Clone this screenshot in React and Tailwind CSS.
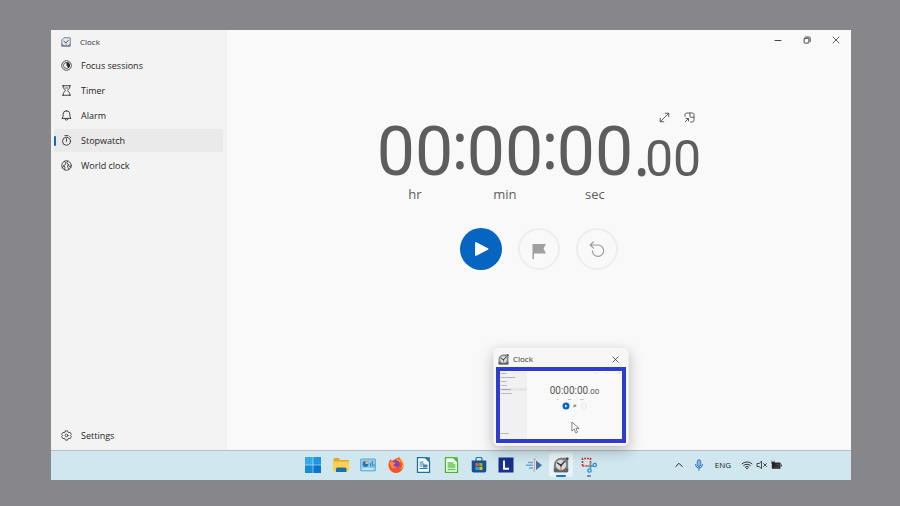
import React from "react";

const line = { fill: "none", stroke: "currentColor", strokeLinecap: "round", strokeLinejoin: "round" };

function ClockLogo({ className }) {
  return (
    <svg viewBox="0 0 20 20" className={className} aria-hidden="true">
      <path d="M10 1h7.500A1.500 1.500 0 0 1 19 2.500V17.500A1.500 1.500 0 0 1 17.500 19h-15A1.500 1.500 0 0 1 1 17.500V10a9 9 0 0 1 9-9z" fill="#7f8387" />
      <path d="M1 14.500h18v3a1.500 1.500 0 0 1-1.500 1.500h-15A1.500 1.500 0 0 1 1 17.500z" fill="#5d6165" />
      <circle cx="10" cy="9.800" r="7" fill="#d9dadb" stroke="#5f6468" strokeWidth=".8" />
      <path d="M5.500 7.500 10 10.500l4-4.500" fill="none" stroke="#2e2e2e" strokeWidth="1.600" strokeLinecap="round" />
      <path d="M10 10.500v5" stroke="#d9482f" strokeWidth="1" strokeLinecap="round" />
      <circle cx="10" cy="10.500" r="1.400" fill="#333" />
      <circle cx="18" cy="2" r="1.500" fill="#37393b" />
    </svg>
  );
}

function TitleLogo() {
  return (
    <svg viewBox="0 0 20 20" className="size-[10px]" aria-hidden="true">
      <path d="M6 1.500h12.500v17h-17V6z" fill="#e2e8ee" stroke="#6c7a88" strokeWidth="1.800" />
      <path d="M1.500 13v5.500h17V13l-4.500 3.500H6z" fill="#70808f" />
      <path d="m5 8 5 4 5-6" fill="none" stroke="#454f59" strokeWidth="1.800" />
      <path d="M10 12v4" stroke="#d98a70" strokeWidth="1.800" />
    </svg>
  );
}

function FocusIcon() {
  return (
    <svg viewBox="0 0 22 22" className="size-[11px]" aria-hidden="true">
      <circle cx="11" cy="11" r="9.600" {...line} strokeWidth="1.500" strokeDasharray="3.500 1.200" />
      <circle cx="11" cy="11" r="6" {...line} strokeWidth="1.500" />
      <path d="M11 4a7 7 0 0 1 4.500 12.400L11 11z" fill="currentColor" />
    </svg>
  );
}

function TimerIcon() {
  return (
    <svg viewBox="0 0 22 22" className="size-[11px]" aria-hidden="true">
      <path d="M3 1.500h16M3 20.500h16M4.500 1.500v3c0 3 4 4 4 6.500s-4 3.500-4 6.500v3M17.500 1.500v3c0 3-4 4-4 6.500s4 3.500 4 6.500v3" {...line} strokeWidth="1.700" />
      <path d="M8 6h6" {...line} strokeWidth="1.300" />
    </svg>
  );
}

function AlarmIcon() {
  return (
    <svg viewBox="0 0 22 22" className="size-[11px]" aria-hidden="true">
      <path d="M11 1.500a6.800 6.800 0 0 0-6.800 6.800V13L2 16.800h18L17.800 13V8.300A6.800 6.800 0 0 0 11 1.500zM8.200 17.500a2.800 2.800 0 0 0 5.600 0" {...line} strokeWidth="1.700" />
    </svg>
  );
}

function StopwatchIcon() {
  return (
    <svg viewBox="0 0 22 22" className="size-[11px]" aria-hidden="true">
      <circle cx="11" cy="12.500" r="8" {...line} strokeWidth="1.700" />
      <path d="M11 7.500v5M8 1.200h6M17.500 3.500l2 2" {...line} strokeWidth="1.700" />
    </svg>
  );
}

function WorldIcon() {
  return (
    <svg viewBox="0 0 22 22" className="size-[11px]" aria-hidden="true">
      <circle cx="11" cy="11" r="9.500" {...line} strokeWidth="1.600" />
      <path d="M3 16l2.500-5L9 9l.5-3L7 3M5.500 11 8 14l-1 5.500M13 2.500 11.500 6l3 2.500 1.500 4 4 2M14.500 8.500 13 13l2.500 5.500" {...line} strokeWidth="1.500" />
    </svg>
  );
}

function GearIcon() {
  return (
    <svg viewBox="0 0 22 22" className="size-[11px]" aria-hidden="true">
      <path d="M8.700 1.800h4.600l.8 2.700 1.600.9 2.700-.6 2.300 4-1.900 2.200 1.900 2.200-2.300 4-2.700-.6-1.600.9-.8 2.700H8.700l-.8-2.700-1.600-.9-2.700.6-2.300-4L3.200 11 1.300 8.800l2.300-4 2.700.6 1.600-.9z" {...line} strokeWidth="1.500" />
      <circle cx="11" cy="11" r="2.800" {...line} strokeWidth="1.500" />
    </svg>
  );
}

const navItems = [
  { label: "Focus sessions", Icon: FocusIcon },
  { label: "Timer", Icon: TimerIcon },
  { label: "Alarm", Icon: AlarmIcon },
  { label: "Stopwatch", Icon: StopwatchIcon, active: true },
  { label: "World clock", Icon: WorldIcon },
];

function NavItem({ label, Icon, active }) {
  return (
    <button
      type="button"
      aria-current={active ? "page" : undefined}
      className={
        "flex h-[23px] items-center rounded-[3px] text-left text-[9px] leading-4 text-[#262626] " +
        (active ? "bg-[#eaeaea]" : "")
      }
    >
      <span className={"mr-[5px] h-[10px] w-[2px] rounded-full " + (active ? "bg-[#1067bd]" : "")} />
      <Icon />
      <span className="ml-[9px]">{label}</span>
    </button>
  );
}

function Sidebar() {
  return (
    <aside className="flex w-44 shrink-0 flex-col border-r border-[#ececec] bg-[#f3f3f3] px-[3px] pb-[3px]">
      <header className="flex h-6 items-center gap-[9px] pl-[7px] text-[8px] text-[#303030]">
        <TitleLogo />
        <span>Clock</span>
      </header>
      <nav className="flex flex-1 flex-col gap-[2px]">
        {navItems.map((item) => (
          <NavItem key={item.label} {...item} />
        ))}
        <div className="mt-auto flex flex-col">
          <NavItem label="Settings" Icon={GearIcon} />
        </div>
      </nav>
    </aside>
  );
}

function WindowControls() {
  return (
    <div className="flex h-5 justify-end pr-px text-[#333]">
      <button type="button" aria-label="Minimize" className="grid w-[29px] place-items-center">
        <svg viewBox="0 0 8 8" className="size-2"><path d="M1 4.500h6" {...line} strokeWidth=".9" /></svg>
      </button>
      <button type="button" aria-label="Restore" className="grid w-[29px] place-items-center">
        <svg viewBox="0 0 8 8" className="size-2"><path d="M1.700 2.300h3.600a.6.6 0 0 1 .6.6v3.600a.6.6 0 0 1-.6.6H1.700a.6.6 0 0 1-.6-.6V2.900a.6.6 0 0 1 .6-.6zM2.500 1h3.300A1.400 1.400 0 0 1 7.200 2.400v3.200" {...line} strokeWidth=".9" /></svg>
      </button>
      <button type="button" aria-label="Close" className="grid w-[29px] place-items-center">
        <svg viewBox="0 0 8 8" className="size-2"><path d="m1 1 6 6M7 1 1 7" {...line} strokeWidth=".8" /></svg>
      </button>
    </div>
  );
}

function Unit({ value, label }) {
  return (
    <div className="flex w-[76px] flex-col items-center">
      <span className="font-['Roboto','Open_Sans',sans-serif] text-[68px] leading-[72px]">{value}</span>
      <span className="text-[13px] leading-3">{label}</span>
    </div>
  );
}

function Colon() {
  return (
    <span className="flex w-[14px] justify-center pb-6 text-[66px] leading-[66px]">:</span>
  );
}

function Stopwatch() {
  return (
    <div className="flex flex-col items-center">
      <div className="flex items-end text-[#5d5d5d]">
        <Unit value="00" label="hr" />
        <Colon />
        <Unit value="00" label="min" />
        <Colon />
        <Unit value="00" label="sec" />
        <div className="flex flex-col gap-[2px] pb-4">
          <div className="flex justify-end gap-[14px] pr-[6px] text-[#444]">
            <button type="button" aria-label="Expand">
              <svg viewBox="0 0 22 22" className="size-[11px]"><path d="M3 19 19 3M12.500 2.500h7v7M2.500 12.500v7h7" {...line} strokeWidth="1.700" /></svg>
            </button>
            <button type="button" aria-label="Keep on top">
              <svg viewBox="0 0 22 22" className="size-[11px]"><path d="M2 9V5.500A3.500 3.500 0 0 1 5.500 2h11A3.500 3.500 0 0 1 20 5.500v11a3.500 3.500 0 0 1-3.500 3.500H13M12 2v7a1.500 1.500 0 0 0 1.500 1.500H20M2.500 19.500 9 13M4 13h5v5" {...line} strokeWidth="1.700" /></svg>
            </button>
          </div>
          <div className="flex items-baseline">
            <span className="w-3 text-[66px] leading-[50px]">.</span>
            <span className="font-['Roboto','Open_Sans',sans-serif] text-[50px] leading-[50px]">00</span>
          </div>
        </div>
      </div>
      <div className="mt-7 flex gap-4">
        <button type="button" aria-label="Start" className="grid size-[42px] place-items-center rounded-full bg-[#0565c0] text-white">
          <svg viewBox="0 0 16 16" className="size-4"><path d="M3 2v12L14.500 8z" fill="currentColor" stroke="currentColor" strokeWidth="1.800" strokeLinejoin="round" /></svg>
        </button>
        <button type="button" aria-label="Lap" className="grid size-[42px] place-items-center rounded-full border-2 border-[#ededed] text-[#a0a0a0]">
          <svg viewBox="0 0 16 16" className="mt-1 size-4"><path d="M1.500 1h13.500L12.500 5.500l2.500 5H3v5.500H1.500z" fill="currentColor" /></svg>
        </button>
        <button type="button" aria-label="Reset" className="grid size-[42px] place-items-center rounded-full border-2 border-[#ededed] text-[#999]">
          <svg viewBox="0 0 16 16" className="size-4"><path d="M4.500.8 1.200 4l3.300 3.200M1.200 4H9a5.700 5.700 0 1 1-5.700 5.900" {...line} strokeWidth="1.100" /></svg>
        </button>
      </div>
    </div>
  );
}

function Thumbnail() {
  return (
    <div className="relative flex h-[76px] border-4 border-[#2f3dce] bg-[#f9f9f9]">
      <div className="flex w-[27px] flex-col gap-[1px] bg-[#f1f1f1] pt-[1px] text-[2px] leading-[3px] text-[#444]">
        <span>▪ Clock</span>
        <span>▪ Focus sessions</span>
        <span>▪ Timer</span>
        <span>▪ Alarm</span>
        <span className="bg-[#e6e6e6]">▪ Stopwatch</span>
        <span>▪ World clock</span>
        <span className="mt-auto pb-1">▪ Settings</span>
      </div>
      <div className="flex flex-1 flex-col items-center pt-[13px] text-[#555]">
        <div className="font-['Roboto','Open_Sans',sans-serif] text-[10px] leading-[13px]">
          00:00:00<span className="text-[8px]">.00</span>
        </div>
        <div className="flex w-9 justify-between text-[2px] leading-[3px]">
          <span>hr</span><span>min</span><span>sec</span><span />
        </div>
        <svg viewBox="0 0 28 8" className="mt-[1px] h-2 w-7">
          <circle cx="5" cy="4" r="3.500" fill="#0565c0" />
          <path d="M4 2.500v3L6.500 4z" fill="#fff" />
          <path d="M12.500 2.800h3l-.5 1 .5 1h-2.500v1h-.5z" fill="#888" />
          <circle cx="23" cy="4" r="2.500" fill="none" stroke="#ddd" strokeWidth=".6" />
        </svg>
      </div>
      <svg viewBox="0 0 10 14" className="absolute top-[50px] left-[71px] h-[13px] w-[9px]">
        <path d="M1 1v10l2.500-2.300L5.300 13l2-.9-1.900-4.100H9z" fill="#fff" stroke="#555" strokeWidth=".8" />
      </svg>
      <div className="absolute top-0 right-[2px] flex gap-[10px] text-[3px] leading-[4px] text-[#777]" aria-hidden="true">
        <span>–</span><span>▫</span><span>×</span>
      </div>
    </div>
  );
}

function Preview() {
  return (
    <div className="absolute right-[222px] bottom-[34px] w-[136px] rounded-[5px] border border-[#ededed] bg-[#f7f7f7] px-[2px] pb-[2px] shadow-[0_5px_14px_rgba(0,0,0,0.25)]">
      <div className="flex h-[19px] items-center pt-[3px] pr-[7px] pl-[2px]">
        <ClockLogo className="size-[11px]" />
        <span className="ml-1 text-[8px] text-[#303030]">Clock</span>
        <button type="button" aria-label="Close preview" className="ml-auto text-[#333]">
          <svg viewBox="0 0 8 8" className="size-[7px]"><path d="m1 1 6 6M7 1 1 7" {...line} strokeWidth=".9" /></svg>
        </button>
      </div>
      <Thumbnail />
    </div>
  );
}

const apps = [
  {
    label: "Start",
    art: (
      <>
        <path d="M0 0h7.700v7.700H0z" fill="#35a9ea" />
        <path d="M8.300 0H16v7.700H8.300z" fill="#2196df" />
        <path d="M0 8.300h7.700V16H0z" fill="#168bd8" />
        <path d="M8.300 8.300H16V16H8.300z" fill="#0877cc" />
      </>
    ),
  },
  {
    label: "File Explorer",
    art: (
      <>
        <path d="M.5 2q0-1 1-1h4l1.500 2H15q1 0 1 1v9H.5z" fill="#e5a32c" />
        <path d="M.5 4.500H16v10H.5z" fill="#fbd14f" />
        <path d="M3 15v-3q0-1.500 1.500-1.500h7.500q1.500 0 1.500 1.500V15z" fill="#1c6fae" />
      </>
    ),
  },
  {
    label: "Control Panel",
    art: (
      <>
        <rect x=".4" y="1.900" width="15.200" height="12" rx="1" fill="#8fcaea" stroke="#4a9bc8" strokeWidth=".7" />
        <circle cx="5.500" cy="7" r="2.900" fill="#1d76b5" />
        <path d="M5.500 7V4.100A2.900 2.900 0 0 1 8.400 7z" fill="#f6b27a" />
        <path d="M10.500 9.500V6M12.300 9.500V4M14 9.500V7" stroke="#2a7fb8" strokeWidth=".9" />
        <path d="M2.500 12h11" stroke="#eaf6fc" strokeWidth="1.200" />
      </>
    ),
  },
  {
    label: "Firefox",
    art: (
      <>
        <path d="M8 1.500C11 1 10.500 0 11 0c2.500 2 4.700 4.800 4.700 8.300A7.600 7.600 0 0 1 .4 8.300C.4 5.500 1.500 3.500 3 2l.7 2z" fill="#f7522f" />
        <path d="M11 0c.4 2.500 3.500 4 3.500 7.500 0 2-1 4-2.500 5 3.500-1 4-5 3.500-6.500C15 3.500 13 1.500 11 0z" fill="#ffc531" />
        <path d="M8 2c3 0 4.500 1.500 5 3.500-1-1-2-1-2-1z" fill="#ffb52e" />
        <path d="M3.700 4.500C6 3 9 3 11 5c2 3-.5 6.500-4 6S3 8 4.500 6z" fill="#7942c8" />
        <path d="M1.500 6c1-1.500 3-2 4.500-1l1.500 1.500-2 1.500c.5 2 2.500 2 4 1-1 2.500-4 3-6 1.500z" fill="#ff8a30" />
      </>
    ),
  },
  {
    label: "Writer",
    art: (
      <>
        <path d="M2.500.7h8l4 4v10.600h-12z" fill="#fff" stroke="#21709a" strokeWidth="1.300" />
        <path d="M10 .2h4.800V5z" fill="#21709a" />
        <path d="M4.500 5h4M4.500 7h5M4.500 9h3M4.500 11.500h8" stroke="#247ba8" strokeWidth="1" />
        <path d="M8 7.500h4.500v3H8z" fill="#3588b3" />
      </>
    ),
  },
  {
    label: "Calc",
    art: (
      <>
        <path d="M2.500.7h8l4 4v10.600h-12z" fill="#fff" stroke="#43b82f" strokeWidth="1.300" />
        <path d="M10 .2h4.800V5z" fill="#43b82f" />
        <path d="M4.500 6h6M4.500 8h8M4.500 10h8M4.500 12.500h8" stroke="#5bc348" strokeWidth="1.300" />
      </>
    ),
  },
  {
    label: "Microsoft Store",
    art: (
      <>
        <path d="M5 4V2q0-1.500 1.500-1.500h3Q11 .5 11 2v2" fill="none" stroke="#1c6eaa" strokeWidth="1.200" />
        <path d="M.7 3.500h14.600v10q0 2-2 2H2.700q-2 0-2-2z" fill="#17528e" />
        <path d="M4.500 6h3.200v3.200H4.500z" fill="#ef5a2a" />
        <path d="M8.300 6h3.200v3.200H8.300z" fill="#82ba2b" />
        <path d="M4.500 9.800h3.200V13H4.500z" fill="#35a6e5" />
        <path d="M8.300 9.800h3.200V13H8.300z" fill="#f8b91c" />
      </>
    ),
  },
  {
    label: "L editor",
    art: (
      <>
        <path d="M.5.5h15v15H.5z" fill="#182f8c" />
        <path d="M6 3.500v8.300h5" fill="none" stroke="#fff" strokeWidth="1.900" />
      </>
    ),
  },
  {
    label: "Media tool",
    art: (
      <>
        <path d="M2 5.500h5M0 8.200h7M3 11h4" stroke="#6fa6d6" strokeWidth="1.400" />
        <path d="M10 3.500v9.500L16 8.200z" fill="#41739f" />
        <path d="M7 2h1.500v12H7M10 2H8.500" fill="none" stroke="#e6a090" strokeWidth="1.100" />
      </>
    ),
  },
  { label: "Clock", active: true },
  {
    label: "Snipping Tool",
    running: true,
    art: (
      <>
        <path d="M1.500 9V1.500H9.500V5M1.500 9H6" fill="none" stroke="#d0392b" strokeWidth="1.700" strokeDasharray="2 1" />
        <path d="M9.500 5v6.500M6 9h6.500" fill="none" stroke="#7b8790" strokeWidth="1.700" />
        <circle cx="13.800" cy="8" r="1.700" fill="none" stroke="#2196dc" strokeWidth="1.300" />
        <circle cx="8.500" cy="13.500" r="1.700" fill="none" stroke="#2196dc" strokeWidth="1.300" />
      </>
    ),
  },
];

function Tray() {
  return (
    <div className="flex items-center justify-end pr-[69px] pb-px text-[#222]">
      <button type="button" aria-label="Show hidden icons" className="mr-[11px]">
        <svg viewBox="0 0 8 8" className="size-2"><path d="M.8 5.500 4 2.300l3.200 3.200" {...line} /></svg>
      </button>
      <button type="button" aria-label="Microphone" className="mr-[11px] text-[#2d6fbb]">
        <svg viewBox="0 0 10 12" className="h-3 w-[10px]">
          <rect x="3.300" y=".8" width="3.400" height="6.600" rx="1.700" fill="#8ab8e6" stroke="currentColor" strokeWidth=".9" />
          <path d="M1.500 5.500a3.500 3.500 0 0 0 7 0M5 9v2.200" {...line} />
        </svg>
      </button>
      <span className="mr-[10px] text-[8px]">ENG</span>
      <button type="button" aria-label="Network, volume and battery" className="flex items-center gap-[3px]">
        <svg viewBox="0 0 12 10" className="h-[10px] w-3">
          <path d="M1 3.800a7.200 7.200 0 0 1 10 0M2.600 5.500a4.900 4.900 0 0 1 6.800 0M4.200 7.100a2.600 2.600 0 0 1 3.600 0" {...line} strokeWidth=".9" />
          <circle cx="6" cy="8.500" r=".8" fill="currentColor" />
        </svg>
        <svg viewBox="0 0 11 10" className="h-[10px] w-[11px]">
          <path d="M5.500 1.500v7L3 6.500H1v-3h2zM7.500 3.500l3 3M10.500 3.500l-3 3" {...line} strokeWidth=".8" />
        </svg>
        <svg viewBox="0 0 12 10" className="h-[10px] w-3">
          <path d="M2.500 2.500h7.300q.7 0 .7.700V8q0 .7-.7.700H2.500q-.7 0-.7-.7V5z" fill="currentColor" />
          <path d="M10.900 4.500h.9v2h-.9zM1.500.8h.8v1.200h1.400V.8h.8v3L3.500 5 1.500 3.800z" fill="currentColor" />
          <path d="M5.500 4.200h3.500v2.800H4" fill="none" stroke="#7a8589" strokeWidth=".5" />
        </svg>
      </button>
    </div>
  );
}

function Taskbar() {
  return (
    <footer className="grid h-[30px] grid-cols-[1fr_auto_1fr] border-t border-[#b4bfc4] bg-[#d0e7ef]">
      <div />
      <div className="flex w-[300px] items-center justify-between pb-px">
        {apps.map(({ label, art, active, running }) => (
          <button
            key={label}
            type="button"
            aria-label={label}
            className={
              "relative grid size-6 place-items-center rounded-[3px] " + (active ? "bg-[#e9f3f7]" : "")
            }
          >
            {art ? <svg viewBox="0 0 16 16" className="size-4">{art}</svg> : <ClockLogo className="size-4" />}
            {active && <span className="absolute bottom-0 left-[7px] h-[2px] w-[10px] rounded-full bg-[#1877cc]" />}
            {running && <span className="absolute bottom-0 left-[10px] h-[2px] w-1 rounded-full bg-[#77868c]" />}
          </button>
        ))}
      </div>
      <Tray />
    </footer>
  );
}

export default function App() {
  return (
    <div className="flex min-h-screen flex-col bg-[#86868b] pt-[30px] pr-[49px] pb-[26px] pl-[51px] font-['Open_Sans','Noto_Sans',sans-serif]">
      <div className="relative flex flex-1 flex-col bg-[#f9f9f9]">
        <div className="flex flex-1">
          <Sidebar />
          <main className="flex min-w-0 flex-1 flex-col">
            <WindowControls />
            <div className="pt-[60px]">
              <Stopwatch />
            </div>
          </main>
        </div>
        <Taskbar />
        <Preview />
      </div>
    </div>
  );
}
